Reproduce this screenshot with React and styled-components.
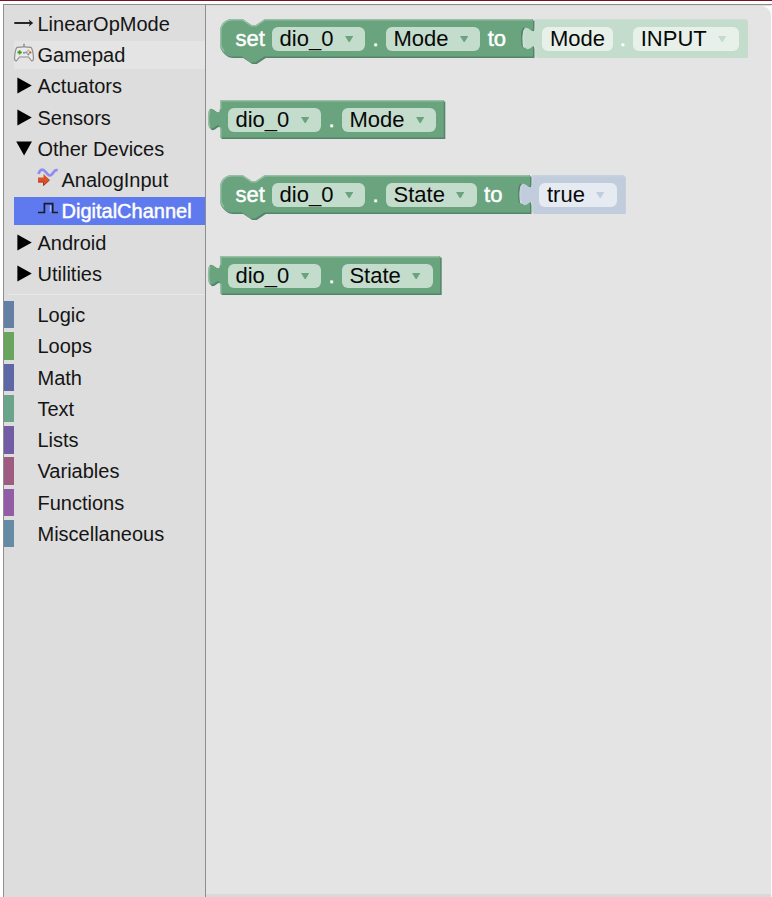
import React from "react";
import styled, { createGlobalStyle } from "styled-components";

const Global = createGlobalStyle`
  * { box-sizing: border-box; }
  html, body { margin: 0; padding: 0; background: #fff; }
  body { font-family: "Liberation Sans", Arial, sans-serif; color: #151515; overflow: hidden; }
`;

const Page = styled.div`
  height: 897px;
  display: flex;
  flex-direction: column;
  border-top: 1px solid #7c1220;
  padding: 3px 0 0 3px;
`;

const Workspace = styled.div`
  flex: 1;
  display: flex;
  border: solid #8e8e8e;
  border-width: 1px 0 0 1px;
  min-height: 0;
`;

const Toolbox = styled.nav`
  width: 202px;
  flex: none;
  display: flex;
  flex-direction: column;
  background: #ddd;
  border-right: 1px solid #8e8e8e;
  padding-top: 4.8px;
`;

const Row = styled.div`
  height: 27.5px;
  flex: none;
  margin: 0 0 3.77px 10px;
  display: flex;
  align-items: center;
  font-size: 20px;
  line-height: 27px;
  white-space: nowrap;
  padding-top: 1.5px;
  padding-left: ${(p) => (p.$nested ? 24 : 0)}px;
  background: ${(p) => (p.$active ? "#5f7aee" : p.$hover ? "#e4e4e4" : "transparent")};
  color: ${(p) => (p.$active ? "#fff" : "inherit")};
  -webkit-text-stroke: ${(p) => (p.$active ? "0.45px #fff" : "0")};
`;

const IconSlot = styled.span`
  width: 23.5px;
  height: 27px;
  flex: none;
  display: flex;
  svg { display: block; overflow: visible; }
`;

const Separator = styled.div`
  height: 1px;
  flex: none;
  margin: 2.6px 0 6.2px 4px;
  background: #e8e8e8;
`;

const Category = styled(Row)`
  margin-left: 0;
  padding-left: 23.5px;
  border-left: 10px solid ${(p) => p.$color};
`;

const Canvas = styled.main`
  flex: 1;
  min-width: 0;
  background: #d9d9d9;
  padding: 1px 0 3px;
  display: flex;
  border-right: 1px solid #fafafa;
`;

const CornerBacking = styled.div`
  flex: 1;
  min-width: 0;
  display: flex;
  background: linear-gradient(#fafafa 14px, #e4e4e4 14px);
`;

const Flyout = styled.div`
  flex: 1;
  min-width: 0;
  background: #e4e4e4;
  border-radius: 0 10px 0 0;
  display: flex;
  flex-direction: column;
  align-items: flex-start;
  padding: 13.4px 0 0 14.4px;
`;

const BlockRow = styled.div`
  display: flex;
  height: 37.5px;
  margin-bottom: ${(p) => p.$after}px;
`;

const BlockBody = styled.div`
  position: relative;
  flex: none;
  width: ${(p) => p.$width}px;
  height: 37.5px;
  display: flex;
  align-items: center;
  gap: 7.3px;
  padding-top: 1.8px;
  padding-left: ${(p) => (p.$statement ? 15 : 7.6)}px;
  margin-left: ${(p) => (p.$plugged ? 1.5 : 0)}px;
`;

const Shape = styled.svg`
  position: absolute;
  left: 0;
  top: 0;
  overflow: visible;
`;

const Label = styled.span`
  position: relative;
  font-size: 22px;
  line-height: 24px;
  color: #fff;
  -webkit-text-stroke: 0.45px #fff;
`;

const Field = styled.span`
  position: relative;
  height: 24px;
  display: flex;
  align-items: center;
  gap: 11.5px;
  padding: 0 ${(p) => (p.$menu ? 12 : 7.5)}px 0 7.5px;
  border-radius: 6px;
  background: ${(p) => p.$bg};
  font-size: 22px;
  line-height: 24px;
  color: #080808;
`;

const Arrow = styled.svg`
  width: 8.4px;
  height: 6.8px;
  flex: none;
`;

const green = { fill: "#69a47e", light: "#97bfa5", dark: "#54846a", field: "#c3dccc" };
const greenShadow = { fill: "#c3dccc", light: "#c9dfd1", dark: "#c3dccc", field: "#e7f1ea" };
const blueShadow = { fill: "#c1ccdd", light: "#c8d1e0", dark: "#c1ccdd", field: "#e6ebf2" };

const TAB = "v 5 c 0,10 -8,-8 -8,7.5 s 8,-2.5 8,7.5";

function Outline({ kind, width, colors }) {
  const w = width / 1.5;
  const right = kind === "statement" ? `H ${w} ${TAB} V 25` : `H ${w} V 25`;
  const d =
    kind === "statement"
      ? `M 0,8 A 8,8 0 0,1 8,0 H 15 l 6,4 3,0 6,-4 ${right} H 29.5 l -6,4 -3,0 -6,-4 H 8 A 8,8 0 0,1 0,17 Z`
      : `M 0,0 ${right} H 0 V 20 c 0,-10 -8,8 -8,-7.5 s 8,2.5 8,-7.5 Z`;
  const shine =
    kind === "statement"
      ? `M 2.7,21.3 A 7.5,7.5 0 0,1 0.5,17 V 8 A 7.5,7.5 0 0,1 8,0.5 H 15 l 6,4 3,0 6,-4 H ${w - 0.5}`
      : `M 0.5,24.5 V 18.5 m -7.36,-0.5 q -1.52,-5.5 0,-11 m 7.36,-1 V 0.5 H ${w - 0.5}`;
  return (
    <Shape width={width} height="37.5" viewBox={`0 0 ${w} 25`}>
      <path d={d} fill={colors.dark} transform="translate(1,1)" />
      <path d={d} fill={colors.fill} />
      <path d={shine} fill="none" stroke={colors.light} strokeWidth="1" />
    </Shape>
  );
}

function Block({ kind, width, colors, plugged, children }) {
  return (
    <BlockBody $width={width} $statement={kind === "statement"} $plugged={plugged}>
      <Outline kind={kind} width={width} colors={colors} />
      {children}
    </BlockBody>
  );
}

function Dropdown({ colors, children }) {
  return (
    <Field $menu $bg={colors.field}>
      {children}
      <Arrow viewBox="0 0 8.6 7">
        <path d="M0 0H8.6L4.3 7Z" fill={colors.fill} />
      </Arrow>
    </Field>
  );
}

const ArrowIcon = () => (
  <svg width="20" height="20" viewBox="0 0 20 20">
    <path d="M0.3 12H18" stroke="#1c1c1c" strokeWidth="1.9" />
    <path d="M14.8 8.4L19.2 12L14.8 15.6L16 12Z" fill="#1c1c1c" />
  </svg>
);

const GamepadIcon = () => (
  <svg width="20" height="20" viewBox="0 0 20 20">
    <path d="M10 1.8V6" stroke="#8c8c8c" strokeWidth="1.5" />
    <path d="M3 5.3Q10 4.4 17 5.3Q19 7.5 19.5 16Q19.5 19 17.5 18.8L14.5 15H5.5L2.5 18.8Q.5 19 .5 16Q1 7.5 3 5.3Z" fill="#ebebeb" stroke="#8e8e8e" strokeWidth="1.2" />
    <path d="M3.4 10.4H7.8M5.6 8.2V12.6" stroke="#439a16" strokeWidth="1.7" />
    <path d="M9 10.8H11" stroke="#777" strokeWidth="1.2" />
    <circle cx="14.3" cy="8.5" r="1.1" fill="#dfaa45" />
    <circle cx="14.3" cy="12.3" r="1.1" fill="#62a65d" />
    <circle cx="12.4" cy="10.4" r="1.2" fill="#639ee1" />
    <circle cx="16.2" cy="10.4" r="1.2" fill="#df5541" />
  </svg>
);

const Collapsed = () => (
  <svg width="20" height="27" viewBox="0 0 20 27">
    <path d="M3.4 4.6L17.8 12.5L3.4 20.6Z" fill="#000" />
  </svg>
);

const Expanded = () => (
  <svg width="20" height="27" viewBox="0 0 20 27">
    <path d="M2.2 5.4H18L10.1 19.6Z" fill="#000" />
  </svg>
);

const AnalogIcon = () => (
  <svg width="20" height="20" viewBox="0 0 20 20">
    <path d="M.5 7C2 1.8 5 1.5 7.5 4.8S12 9.8 14.5 6.6S17.3 2.8 19.7 3.2" stroke="#8d8cf0" strokeWidth="2.7" fill="none" />
    <path d="M0 10.5H5.5V7L11.8 13L5.5 19V15.2H0Z" fill="#dc5228" />
    <path d="M0 15H5.5V18.5L11.5 13" fill="none" stroke="#a83a20" />
  </svg>
);

const DigitalIcon = () => (
  <svg width="20" height="20" viewBox="0 0 20 20">
    <path d="M0 14.5H6.4V5.6H14.7V14.5H20" stroke="#1c1c24" strokeWidth="1.7" fill="none" />
    <path d="M12.5 7.5V13.5" stroke="#a9b8ff" strokeWidth="1.4" />
  </svg>
);

const items = [
  { text: "LinearOpMode", Icon: ArrowIcon },
  { text: "Gamepad", Icon: GamepadIcon, hover: true },
  { text: "Actuators", Icon: Collapsed },
  { text: "Sensors", Icon: Collapsed },
  { text: "Other Devices", Icon: Expanded },
  { text: "AnalogInput", Icon: AnalogIcon, nested: true },
  { text: "DigitalChannel", Icon: DigitalIcon, nested: true, active: true },
  { text: "Android", Icon: Collapsed },
  { text: "Utilities", Icon: Collapsed },
];

const categories = [
  ["Logic", "#6480a4"],
  ["Loops", "#69a55f"],
  ["Math", "#5f67a5"],
  ["Text", "#6aa48b"],
  ["Lists", "#725da5"],
  ["Variables", "#9e5d80"],
  ["Functions", "#935da5"],
  ["Miscellaneous", "#658ba5"],
];

export default function App() {
  return (
    <>
      <Global />
      <Page>
        <Workspace>
          <Toolbox>
            {items.map(({ text, Icon, hover, nested, active }) => (
              <Row key={text} $hover={hover} $nested={nested} $active={active}>
                <IconSlot><Icon /></IconSlot>
                {text}
              </Row>
            ))}
            <Separator />
            {categories.map(([name, color]) => (
              <Category key={name} $color={color}>{name}</Category>
            ))}
          </Toolbox>
          <Canvas>
            <CornerBacking>
              <Flyout>
                <BlockRow $after={43.5}>
                  <Block kind="statement" width={313} colors={green}>
                    <Label>set</Label>
                    <Dropdown colors={green}>dio_0</Dropdown>
                    <Label>.</Label>
                    <Dropdown colors={green}>Mode</Dropdown>
                    <Label>to</Label>
                  </Block>
                  <Block kind="value" width={211.5} colors={greenShadow} plugged>
                    <Field $bg={greenShadow.field}>Mode</Field>
                    <Label>.</Label>
                    <Dropdown colors={greenShadow}>INPUT</Dropdown>
                  </Block>
                </BlockRow>
                <BlockRow $after={37.5}>
                  <Block kind="value" width={223.8} colors={green}>
                    <Dropdown colors={green}>dio_0</Dropdown>
                    <Label>.</Label>
                    <Dropdown colors={green}>Mode</Dropdown>
                  </Block>
                </BlockRow>
                <BlockRow $after={43.5}>
                  <Block kind="statement" width={310} colors={green}>
                    <Label>set</Label>
                    <Dropdown colors={green}>dio_0</Dropdown>
                    <Label>.</Label>
                    <Dropdown colors={green}>State</Dropdown>
                    <Label>to</Label>
                  </Block>
                  <Block kind="value" width={92.3} colors={blueShadow} plugged>
                    <Dropdown colors={blueShadow}>true</Dropdown>
                  </Block>
                </BlockRow>
                <BlockRow $after={0}>
                  <Block kind="value" width={220.2} colors={green}>
                    <Dropdown colors={green}>dio_0</Dropdown>
                    <Label>.</Label>
                    <Dropdown colors={green}>State</Dropdown>
                  </Block>
                </BlockRow>
              </Flyout>
            </CornerBacking>
          </Canvas>
        </Workspace>
      </Page>
    </>
  );
}
